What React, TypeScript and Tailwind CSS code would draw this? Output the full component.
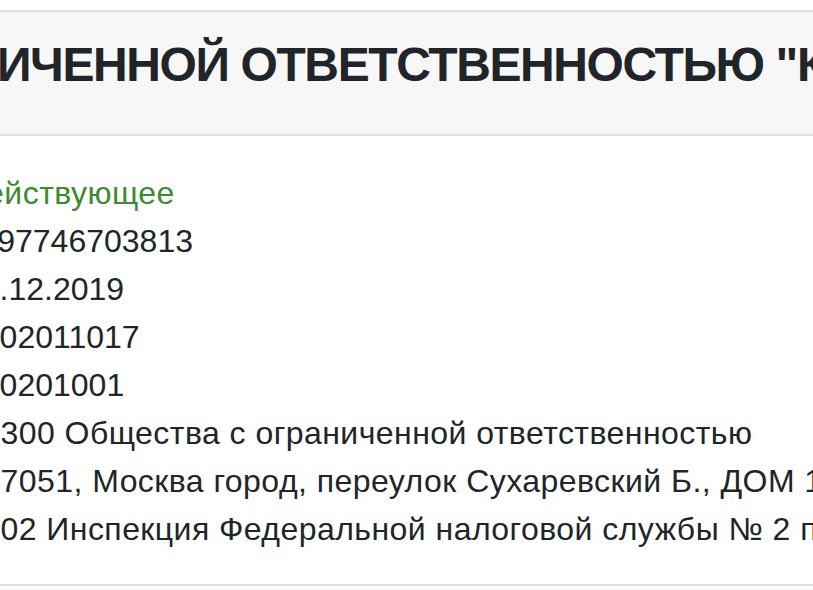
const rows = [
  { value: "Действующее", green: true, text: true },
  { value: "1197746703813" },
  { value: "16.12.2019" },
  { value: "7702011017" },
  { value: "770201001" },
  { value: "12300 Общества с ограниченной ответственностью", text: true },
  { value: "127051, Москва город, переулок Сухаревский Б., ДОМ 19, СТРОЕНИЕ 1", text: true },
  { value: "7702 Инспекция Федеральной налоговой службы № 2 по г. Москве", text: true },
];

export default function App() {
  return (
    <div className="w-[813px] h-[590px] overflow-hidden bg-white pt-[10px] font-['Liberation_Sans',Arial,sans-serif] text-[#212529]">
      <div className="border-y-2 border-[#dfdfdf]">
        <div className="bg-[#f7f7f7] border-b-2 border-[#dfdfdf] py-[24px] overflow-hidden">
          <h1 className="-ml-[490px] mb-[16px] whitespace-nowrap text-[48px] font-bold leading-[1.2] tracking-[-1.4px]">
            ОБЩЕСТВО С ОГРАНИЧЕННОЙ ОТВЕТСТВЕННОСТЬЮ "КОМПАНИЯ"
          </h1>
        </div>
        <div className="pt-[33px] pb-[31px] overflow-hidden">
          <div className="-ml-[36px] flex flex-col">
            {rows.map((r, i) => (
              <div
                key={i}
                className={`whitespace-nowrap text-[32px] leading-[48px] ${r.text ? "tracking-[0.45px]" : ""} ${r.green ? "text-[#3d8b30]" : ""}`}
              >
                {r.value}
              </div>
            ))}
          </div>
        </div>
      </div>
    </div>
  );
}
